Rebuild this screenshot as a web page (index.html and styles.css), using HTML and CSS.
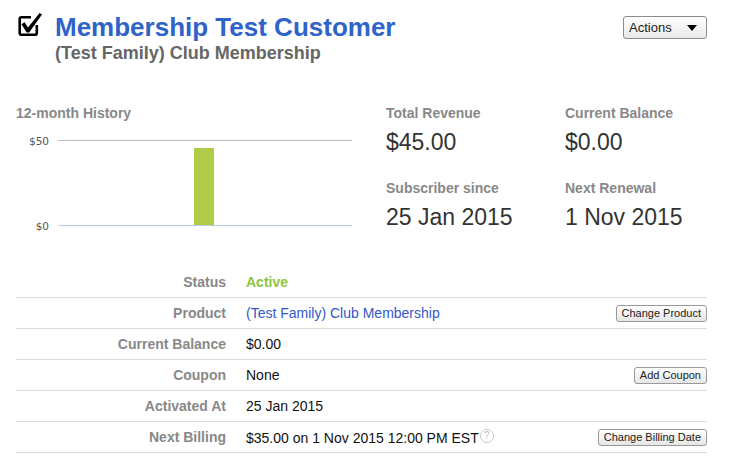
FILE: index.html
```html
<!DOCTYPE html>
<html>
<head>
<meta charset="utf-8">
<link rel="stylesheet" href="styles.css">
</head>
<body>
<div class="page">
  <header class="head">
    <div class="head-left">
      <svg class="check-icon" width="26" height="26" viewBox="0 0 26 26">
        <path d="M15 6.2 H5.5 a1.8 1.8 0 0 0 -1.8 1.8 V22 a1.8 1.8 0 0 0 1.8 1.8 H19 a1.8 1.8 0 0 0 1.8 -1.8 V14" fill="none" stroke="#000" stroke-width="2.6"/>
        <path d="M5.5 13.2 L8.6 11.2 L12 16.6 L23.6 2 L26 3.6 L13.2 21.6 L10.6 21.6 Z" fill="#000"/>
      </svg>
      <div class="titles">
        <h1 class="title">Membership Test Customer</h1>
        <div class="subtitle">(Test Family) Club Membership</div>
      </div>
    </div>
    <button class="actions-btn"><span>Actions</span><span class="tri"></span></button>
  </header>

  <section class="summary">
    <div class="history">
      <h3 class="sec-label">12-month History</h3>
      <svg class="chart" width="336" height="123" viewBox="0 0 336 123">
        <line x1="42" y1="18.5" x2="336" y2="18.5" stroke="#bdbdbd" stroke-width="1"/>
        <line x1="42" y1="103.5" x2="336" y2="103.5" stroke="#bccce3" stroke-width="1"/>
        <rect x="178" y="26" width="20" height="77" fill="#b0cb48"/>
        <text x="33" y="23" text-anchor="end" class="axis">$50</text>
        <text x="33" y="108" text-anchor="end" class="axis">$0</text>
      </svg>
    </div>
    <div class="stats">
      <div class="stat">
        <div class="stat-label">Total Revenue</div>
        <div class="stat-value">$45.00</div>
      </div>
      <div class="stat">
        <div class="stat-label">Current Balance</div>
        <div class="stat-value">$0.00</div>
      </div>
      <div class="stat">
        <div class="stat-label">Subscriber since</div>
        <div class="stat-value">25 Jan 2015</div>
      </div>
      <div class="stat">
        <div class="stat-label">Next Renewal</div>
        <div class="stat-value">1 Nov 2015</div>
      </div>
    </div>
  </section>

  <div class="details">
    <div class="row">
      <div class="label">Status</div>
      <div class="value active">Active</div>
      <div></div>
    </div>
    <div class="row">
      <div class="label">Product</div>
      <div class="value"><a class="link">(Test Family) Club Membership</a></div>
      <button class="small-btn">Change Product</button>
    </div>
    <div class="row">
      <div class="label">Current Balance</div>
      <div class="value">$0.00</div>
      <div></div>
    </div>
    <div class="row">
      <div class="label">Coupon</div>
      <div class="value">None</div>
      <button class="small-btn">Add Coupon</button>
    </div>
    <div class="row">
      <div class="label">Activated At</div>
      <div class="value">25 Jan 2015</div>
      <div></div>
    </div>
    <div class="row">
      <div class="label">Next Billing</div>
      <div class="value">$35.00 on 1 Nov 2015 12:00 PM EST<span class="help">?</span></div>
      <button class="small-btn">Change Billing Date</button>
    </div>
  </div>
</div>
</body>
</html>
```

FILE: styles.css
```css
html, body {
  margin: 0;
  padding: 0;
  background: #fff;
}
body {
  font-family: "Liberation Sans", Arial, Helvetica, sans-serif;
  color: #111;
}
.page {
  padding: 12px 27px 0 16px;
}
.head {
  display: flex;
  justify-content: space-between;
  align-items: flex-start;
}
.head-left {
  display: flex;
  align-items: flex-start;
}
.check-icon {
  margin-top: -1px;
  margin-right: 13px;
  flex: none;
}
.titles {
  display: flex;
  flex-direction: column;
}
.title {
  margin: 0;
  font-size: 26px;
  line-height: 30px;
  font-weight: bold;
  color: #2f63c9;
}
.subtitle {
  font-size: 18px;
  line-height: 22px;
  font-weight: bold;
  color: #666;
}
.actions-btn {
  margin-top: 4px;
  width: 84px;
  height: 23px;
  display: flex;
  align-items: center;
  justify-content: space-between;
  padding: 0 9px 0 5px;
  border: 1px solid #8c8c8c;
  border-radius: 3px;
  background: linear-gradient(#ffffff, #e9e9e9);
  font-family: "Liberation Sans", Arial, sans-serif;
  font-size: 13px;
  color: #222;
}
.tri {
  width: 0;
  height: 0;
  border-left: 5px solid transparent;
  border-right: 5px solid transparent;
  border-top: 6px solid #000;
}
.summary {
  display: flex;
  margin-top: 40px;
}
.history {
  width: 370px;
  flex: none;
}
.sec-label, .stat-label {
  margin: 0;
  font-size: 14px;
  line-height: 18px;
  font-weight: bold;
  color: #888;
}
.chart {
  display: block;
}
.axis {
  font-family: "DejaVu Sans", Verdana, sans-serif;
  font-size: 10.5px;
  fill: #555;
}
.stats {
  display: grid;
  grid-template-columns: 179px 1fr;
  row-gap: 23px;
  align-content: start;
}
.stat-value {
  margin-top: 6px;
  font-size: 23px;
  line-height: 28px;
  color: #333;
}
.details {
  margin-top: 22px;
}
.row {
  display: grid;
  grid-template-columns: 210px 1fr auto;
  column-gap: 20px;
  align-items: center;
  height: 30px;
  border-bottom: 1px solid #dcdcdc;
}
.label {
  text-align: right;
  font-size: 14px;
  font-weight: bold;
  color: #888;
}
.value {
  font-size: 14px;
  color: #111;
}
.active {
  color: #8cc43e;
  font-weight: bold;
}
.link {
  color: #3457c8;
  text-decoration: none;
}
.help {
  display: inline-block;
  width: 12px;
  height: 12px;
  margin-left: 1px;
  border: 1px solid #c8c8c8;
  border-radius: 50%;
  font-size: 10px;
  line-height: 12px;
  text-align: center;
  color: #c0c0c0;
  vertical-align: 4px;
}
.small-btn {
  height: 17px;
  padding: 0 5px;
  border: 1px solid #999;
  border-radius: 3px;
  background: linear-gradient(#ffffff, #e6e6e6);
  font-family: "Liberation Sans", Arial, sans-serif;
  font-size: 11px;
  line-height: 15px;
  color: #222;
}
```
